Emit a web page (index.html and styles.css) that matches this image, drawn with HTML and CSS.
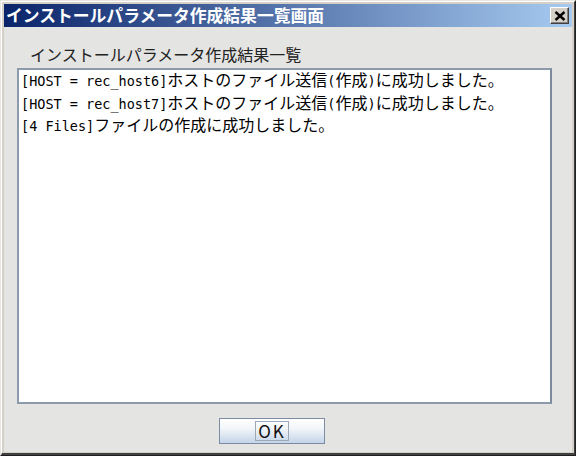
FILE: index.html
```html
<!DOCTYPE html>
<html lang="ja">
<head>
  <meta charset="UTF-8" />
  <title>インストールパラメータ作成結果一覧画面</title>
  <link rel="stylesheet" href="styles.css">
</head>
<body>
  <div class="window">
    <div class="window-inner">
      <div class="title-bar">
        <span class="title-text">インストールパラメータ作成結果一覧画面</span>
        <button class="close-btn" aria-label="閉じる">
          <svg width="12" height="10" viewBox="0 0 12 10">
            <path d="M1.5 1 L10.5 9 M10.5 1 L1.5 9" stroke="#000" stroke-width="2.4" fill="none" />
          </svg>
        </button>
      </div>
      <div class="content">
        <div class="list-label">インストールパラメータ作成結果一覧</div>
        <div class="result-box">
          <div class="line">[HOST = rec_host6]<span class="ja">ホストのファイル送信</span>(<span class="ja">作成</span>)<span class="ja">に成功しました。</span></div>
          <div class="line">[HOST = rec_host7]<span class="ja">ホストのファイル送信</span>(<span class="ja">作成</span>)<span class="ja">に成功しました。</span></div>
          <div class="line">[4 Files]<span class="ja">ファイルの作成に成功しました。</span></div>
        </div>
        <div class="button-row">
          <button class="ok-btn"><span class="focus">OK</span></button>
        </div>
      </div>
    </div>
  </div>
</body>
</html>
```

FILE: styles.css
```css
body {
  margin: 0;
  font-family: "Noto Sans CJK JP", sans-serif;
  background: #e4e4e2;
}
.window {
  width: 576px;
  height: 456px;
  box-sizing: border-box;
  border: 1px solid;
  border-color: #e8e6e0 #202020 #202020 #e8e6e0;
}
.window-inner {
  height: 100%;
  box-sizing: border-box;
  border: 1px solid;
  border-color: #ffffff #404040 #404040 #ffffff;
  border-bottom-width: 2px;
  padding: 2px 2px 1px 2px;
  background: #d4d0c8;
  display: flex;
  flex-direction: column;
}
.title-bar {
  height: 23px;
  flex-shrink: 0;
  display: flex;
  align-items: center;
  justify-content: space-between;
  padding: 0 3px 0 2px;
  background: linear-gradient(to right, #0a246a, #a6caf0);
}
.title-text {
  color: #fff;
  font-weight: bold;
  font-size: 16.8px;
  line-height: 23px;
  white-space: nowrap;
}
.close-btn {
  width: 19px;
  height: 17px;
  padding: 0;
  margin: 0;
  background: #d4d0c8;
  border: 1px solid;
  border-color: #ffffff #404040 #404040 #ffffff;
  box-shadow: inset -1px -1px 0 #808080;
  display: flex;
  align-items: center;
  justify-content: center;
}
.content {
  flex: 1;
  background: #e4e4e2;
  padding: 17px 20px 6px 13px;
  display: flex;
  flex-direction: column;
}
.list-label {
  font-size: 16px;
  line-height: 20px;
  color: #222;
  padding-left: 13px;
  margin-bottom: 4px;
}
.result-box {
  height: 336px;
  box-sizing: border-box;
  background: #fff;
  border: 2px solid #8d9aab;
  border-right-color: #7d8a9b;
  padding: 0 2px;
  font-family: "DejaVu Sans Mono", "Noto Sans CJK JP", monospace;
  font-size: 13.5px;
  color: #000;
}
.line {
  height: 22.5px;
  line-height: 22px;
  white-space: nowrap;
}
.ja {
  font-family: "Noto Sans CJK JP", sans-serif;
  font-size: 16px;
  line-height: 1;
}
.button-row {
  display: flex;
  justify-content: center;
  margin-top: 14px;
  padding-right: 25px;
}
.ok-btn {
  width: 106px;
  height: 26px;
  border: 1px solid #7c8ca4;
  background: linear-gradient(#ffffff, #f2f5f9 40%, #c4d4e8);
  padding: 0;
  display: flex;
  align-items: center;
  justify-content: center;
}
.focus {
  font-family: "Noto Sans CJK JP", sans-serif;
  font-size: 17px;
  line-height: 18px;
  color: #111;
  border: 1px solid #9aa8b8;
  padding: 0 2px;
  letter-spacing: 2px;
}
```
